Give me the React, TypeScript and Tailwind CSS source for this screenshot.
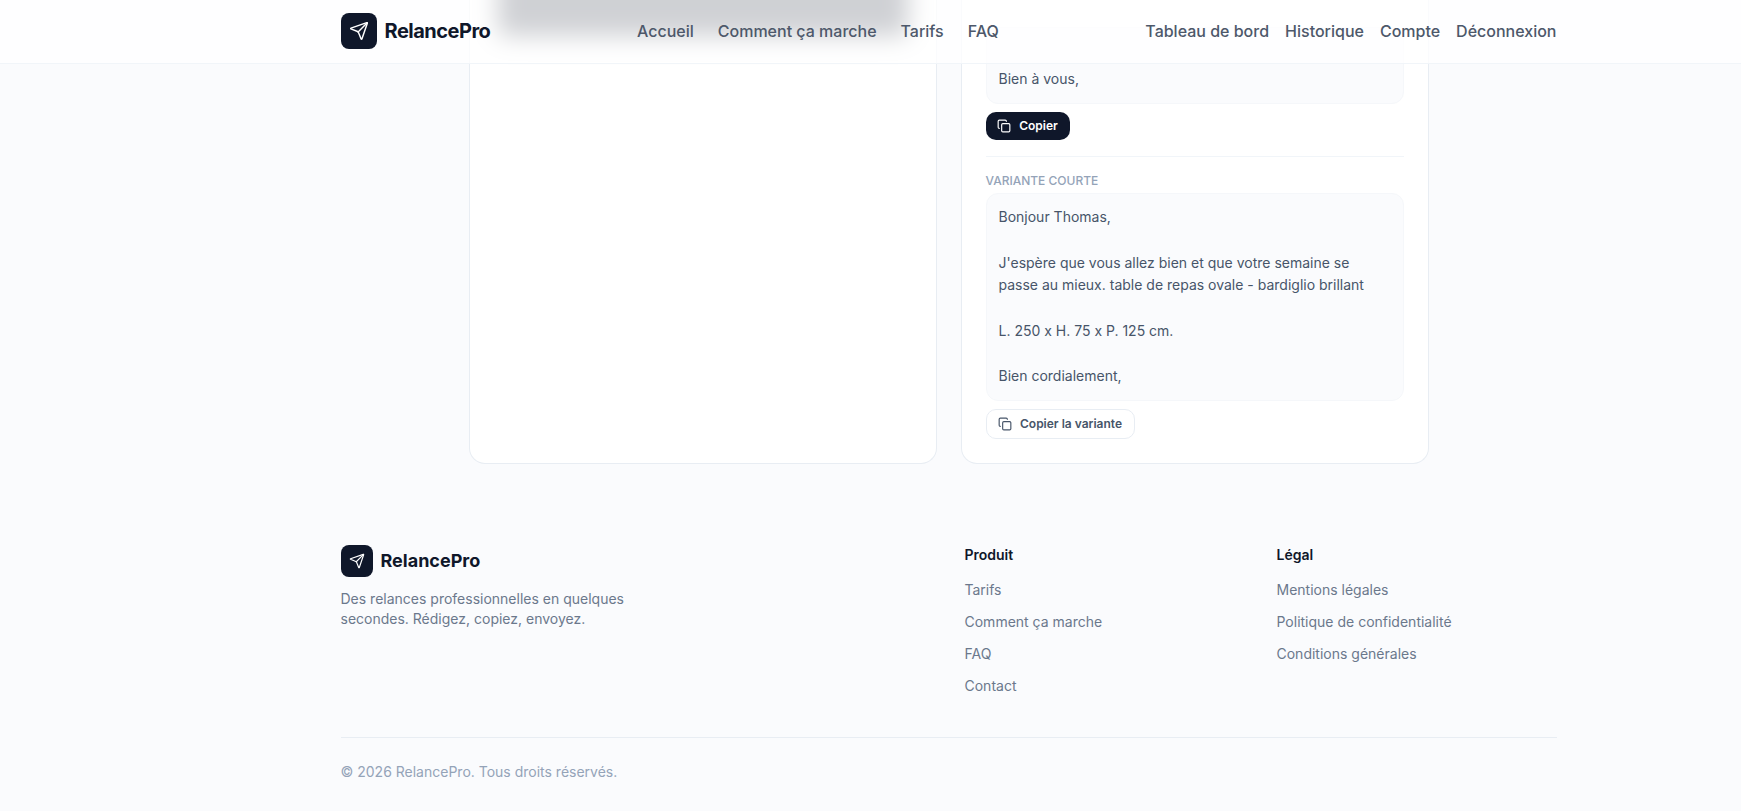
import { Copy, Send } from "lucide-react";

const message = `Bonjour Thomas,

J'espère que vous allez bien et que votre semaine se passe au mieux. table de repas ovale - bardiglio brillant

L. 250 x H. 75 x P. 125 cm.

Bien cordialement,`;

function Logo({ box, icon, text }: { box: string; icon: number; text: string }) {
  return (
    <div className="flex items-center gap-2">
      <span className={`flex items-center justify-center bg-[#0f172a] text-white ${box}`}>
        <Send size={icon} strokeWidth={1.75} />
      </span>
      <span className={text}>RelancePro</span>
    </div>
  );
}

function FooterColumn({ title, links }: { title: string; links: string[] }) {
  return (
    <div>
      <h4 className="mb-[15px] text-sm leading-5 font-semibold text-[#0f172a]">{title}</h4>
      <ul className="space-y-3">
        {links.map((l) => (
          <li key={l} className="text-sm leading-5 text-[#6b788c]">
            {l}
          </li>
        ))}
      </ul>
    </div>
  );
}

export default function App() {
  return (
    <div className="relative h-[811px] overflow-hidden bg-[#fafbfd] font-['Inter',sans-serif]">
      <header className="absolute inset-x-0 top-0 z-10 h-16 border-b border-[#f1f5f9] bg-white/80 pl-[156px]">
        <div className="mx-auto flex h-[62px] max-w-[1280px] items-center justify-between px-8">
          <Logo box="h-9 w-9 rounded-lg" icon={20} text="text-xl font-bold tracking-tight text-[#0f172a]" />
          <nav className="flex items-center gap-6 text-base font-medium text-[#4d586a]">
            <a>Accueil</a>
            <a>Comment ça marche</a>
            <a>Tarifs</a>
            <a>FAQ</a>
          </nav>
          <nav className="flex items-center gap-4 text-base font-medium text-[#4d586a]">
            <a>Tableau de bord</a>
            <a>Historique</a>
            <a>Compte</a>
            <a>Déconnexion</a>
          </nav>
        </div>
      </header>

      <main className="pl-[156px]">
        <div className="mx-auto grid h-[464px] max-w-5xl grid-cols-2 gap-6 px-8">
          <section className="rounded-b-2xl border border-t-0 border-[#e8edf3] bg-white px-6">
            <div className="-mt-10 mr-1 ml-1 h-[76px] rounded-lg bg-[#0f172a] blur-md" />
          </section>
          <section className="flex flex-col justify-end overflow-hidden rounded-b-2xl border border-t-0 border-[#e8edf3] bg-white px-6 pb-6">
            <div className="shrink-0 rounded-xl border border-[#f5f7fa] bg-[#fafbfd] px-3 pt-10 pb-3 text-sm leading-[22.75px] text-[#475569]">
              <p>Bien à vous,</p>
            </div>
            <button className="mt-2 flex h-7 w-[84px] shrink-0 items-center justify-center gap-2 rounded-[10px] bg-[#0f172a] text-xs font-semibold text-white">
              <Copy size={14} />
              Copier
            </button>
            <div className="mt-4 h-px shrink-0 bg-[#f1f5f9]" />
            <div className="mt-4 shrink-0 text-xs leading-4 font-medium text-[#94a3b8] uppercase">Variante courte</div>
            <div className="mt-1 shrink-0 rounded-xl border border-[#f5f7fa] bg-[#fafbfd] p-3 text-sm leading-[22.75px] whitespace-pre-wrap text-[#475569]">
              {message}
            </div>
            <button className="mt-2 flex h-[30px] w-[149px] shrink-0 items-center justify-center gap-2 rounded-[10px] border border-[#e8edf3] bg-white text-xs font-semibold text-[#475569]">
              <Copy size={14} />
              Copier la variante
            </button>
          </section>
        </div>

        <footer className="mx-auto max-w-[1280px] px-8 pt-[81px]">
          <div className="grid grid-cols-4 gap-8 pb-[41px]">
            <div className="col-span-2">
              <Logo box="h-8 w-8 rounded-lg" icon={16} text="text-lg font-bold text-[#0f172a]" />
              <p className="mt-3 max-w-xs text-sm leading-5 text-[#6b788c]">
                Des relances professionnelles en quelques secondes. Rédigez, copiez, envoyez.
              </p>
            </div>
            <FooterColumn title="Produit" links={["Tarifs", "Comment ça marche", "FAQ", "Contact"]} />
            <FooterColumn
              title="Légal"
              links={["Mentions légales", "Politique de confidentialité", "Conditions générales"]}
            />
          </div>
          <div className="border-t border-[#e8edf3] pt-6 text-sm leading-5 text-[#94a3b8]">
            © 2026 RelancePro. Tous droits réservés.
          </div>
        </footer>
      </main>
    </div>
  );
}
